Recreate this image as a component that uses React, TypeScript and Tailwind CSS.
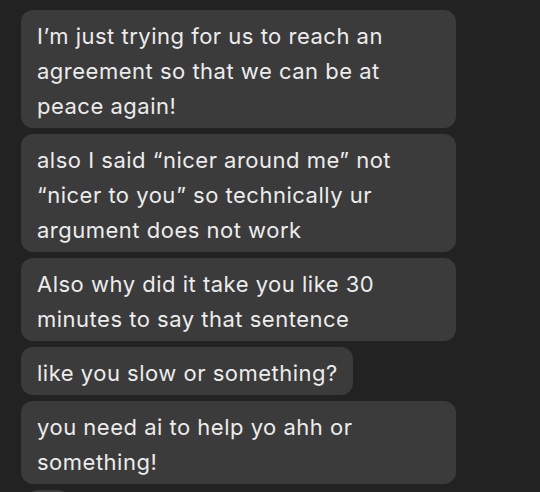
const messages: { lines: string[]; full: boolean }[] = [
  {
    lines: ["I’m just trying for us to reach an", "agreement so that we can be at", "peace again!"],
    full: true,
  },
  {
    lines: ["also I said “nicer around me” not", "“nicer to you” so technically ur", "argument does not work"],
    full: true,
  },
  {
    lines: ["Also why did it take you like 30", "minutes to say that sentence"],
    full: true,
  },
  { lines: ["like you slow or something?"], full: false },
  { lines: ["you need ai to help yo ahh or", "something!"], full: true },
];

function Bubble({ lines, full }: { lines: string[]; full: boolean }) {
  return (
    <div
      className={`rounded-[12px] bg-[#3b3b3b] pt-[9px] pb-[4px] pl-[16px] pr-[15px] text-[22px] leading-[35px] tracking-[0.5px] text-[#ececec] ${
        full ? "w-[435px]" : "w-fit"
      }`}
    >
      {lines.map((line, i) => (
        <div key={i} className="whitespace-nowrap">
          {line}
        </div>
      ))}
    </div>
  );
}

export default function App() {
  return (
    <div
      className="h-[492px] w-[540px] overflow-hidden bg-[#222222] pt-[10px] pl-[21px]"
      style={{ fontFamily: "Inter, Roboto, sans-serif" }}
    >
      <div className="flex flex-col items-start gap-[6px]">
        {messages.map((m, i) => (
          <Bubble key={i} lines={m.lines} full={m.full} />
        ))}
        {/* next bubble peeking at the bottom */}
        <div className="ml-[5px] h-[30px] w-[44px] rounded-[12px] bg-[#3b3b3b]" />
      </div>
    </div>
  );
}
